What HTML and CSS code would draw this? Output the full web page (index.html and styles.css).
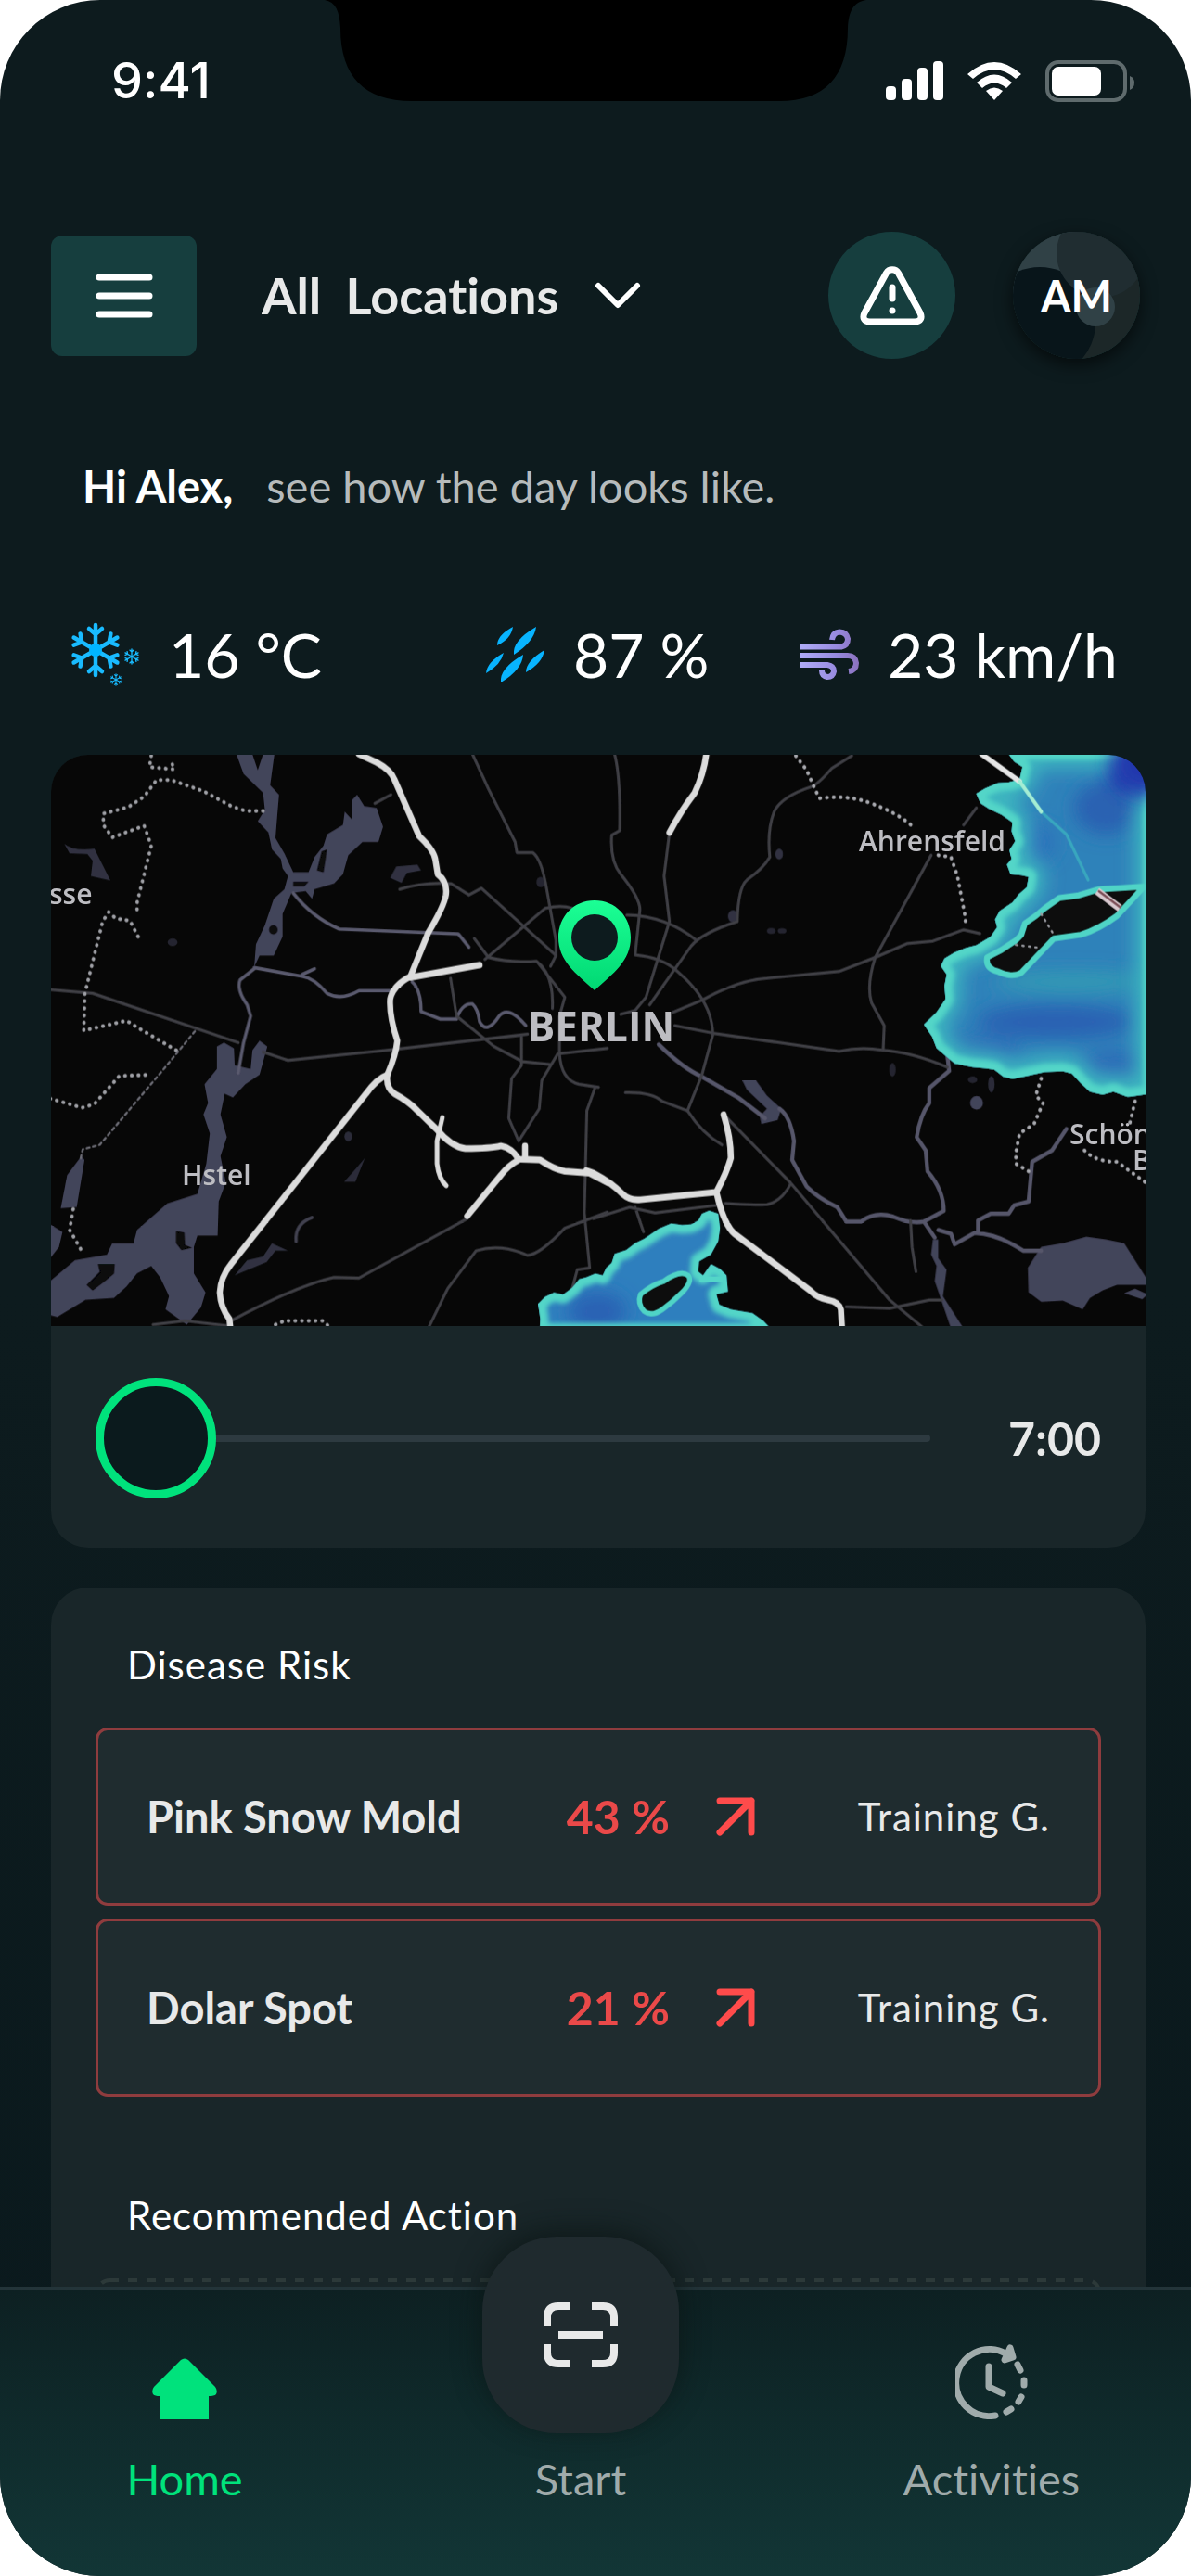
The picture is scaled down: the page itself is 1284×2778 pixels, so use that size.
FILE: index.html
```html
<!DOCTYPE html>
<html lang="en">
<head>
  <meta charset="UTF-8">
  <title>Course Overview</title>
  <meta name="viewport" content="width=device-width, initial-scale=1.0">
  <link rel="stylesheet" href="styles.css">
</head>
<body>

<div class="phone">

  <div class="status-bar">
    <svg class="notch" viewBox="0 0 584 110" aria-hidden="true">
      <path d="M0 0H584C570 2 565 12 564 30Q564 109 490 109H94Q17 109 17 30C16 12 12 2 0 0Z" fill="#000"/>
    </svg>
    <span class="time">9:41</span>
    <div class="status-icons">
      <svg width="62" height="42" viewBox="0 0 62 42" fill="#fff" aria-hidden="true">
        <rect x="0" y="27" width="11" height="15" rx="4"/>
        <rect x="17" y="19" width="11" height="23" rx="4"/>
        <rect x="34" y="7" width="11" height="35" rx="4"/>
        <rect x="51" y="0" width="11" height="42" rx="4"/>
      </svg>
      <svg width="58" height="41" viewBox="0 0 58 41" fill="#fff" aria-hidden="true">
        <path d="M0 13Q29 -13 58 13L52 18Q29 -2 6 18Z"/>
        <path d="M10 22Q29 5 48 22L42 28Q29 17 16 28Z"/>
        <path d="M20 31Q29 24 38 31L29 41Z"/>
      </svg>
      <svg width="96" height="45" viewBox="0 0 96 45" aria-hidden="true">
        <rect x="2" y="2" width="84" height="41" rx="12" fill="none" stroke="#5f6b6d" stroke-width="4"/>
        <rect x="7" y="7" width="53" height="31" rx="7" fill="#fff"/>
        <path d="M91 17Q96 19 96 24Q96 30 91 32Z" fill="#5f6b6d"/>
      </svg>
    </div>
  </div>

  <main>
    <header>
      <button class="menu-button" type="button" aria-label="Menu">
        <svg width="62" height="48" viewBox="0 0 62 48" stroke="#fff" stroke-width="7" stroke-linecap="round">
          <path d="M4 4H58M4 24H58M4 44H58"/>
        </svg>
      </button>
      <div class="location">
        <select aria-label="Location">
          <option>All&nbsp; Locations</option>
        </select>
        <svg width="50" height="30" viewBox="0 0 50 30" fill="none" stroke="#fff" stroke-width="6" stroke-linecap="round" stroke-linejoin="round" aria-hidden="true">
          <path d="M4 4L25 25L46 4"/>
        </svg>
      </div>
      <button class="round-button" type="button" aria-label="Warnings">
        <svg width="70" height="64" viewBox="0 0 70 64" fill="none" stroke="#fff" stroke-width="7" stroke-linecap="round" stroke-linejoin="round">
          <path d="M28.5 7.500L5 50.500C2.500 56 4.500 60 11 60H59C65.500 60 67.500 56 65 50.500L41.500 7.500C38.500 2.500 31.500 2.500 28.500 7.500Z"/>
          <path d="M35 23V35"/>
          <circle cx="35" cy="48" r="3.500" fill="#fff" stroke="none"/>
        </svg>
      </button>
      <button class="round-button avatar" type="button">
        <svg class="avatar-art" viewBox="0 0 137 137" aria-hidden="true">
          <rect width="137" height="137" fill="#1c2728"/>
          <circle cx="24" cy="24" r="50" fill="#304146"/>
          <circle cx="29" cy="98" r="60" fill="#08151a"/>
          <circle cx="95" cy="23" r="48" fill="#202d31"/>
          <circle cx="89" cy="81" r="21" fill="#304146"/>
        </svg>
        <span>AM</span>
      </button>
    </header>

    <p class="greeting"><strong>Hi Alex,</strong> <span>see how the day looks like.</span></p>

    <div class="weather">
      <div class="weather-item">
        <svg width="76" height="70" viewBox="0 0 76 70" aria-hidden="true">
          <defs>
            <g id="flake-arm" fill="none" stroke-linecap="round">
              <path d="M0 0V-27M0 -17L-7 -23M0 -17L7 -23"/>
            </g>
            <g id="flake">
              <use href="#flake-arm"/>
              <use href="#flake-arm" transform="rotate(60)"/>
              <use href="#flake-arm" transform="rotate(120)"/>
              <use href="#flake-arm" transform="rotate(180)"/>
              <use href="#flake-arm" transform="rotate(240)"/>
              <use href="#flake-arm" transform="rotate(300)"/>
            </g>
          </defs>
          <g stroke="#19bbff" stroke-width="4.500">
            <use href="#flake" transform="translate(27 30)"/>
            <use href="#flake" transform="translate(66 37) scale(.3)"/>
            <use href="#flake" transform="translate(49 62) scale(.23)"/>
          </g>
          <circle cx="27" cy="30" r="7" fill="#00b4ff"/>
        </svg>
        <span>16 °C</span>
      </div>
      <div class="weather-item">
        <svg width="64" height="62" viewBox="0 0 64 62" fill="#08b4ff" aria-hidden="true">
          <path d="M29 1Q27 14 12 21Q12 10 29 1Z"/>
          <path d="M54 1Q52 17 30 31Q28 16 54 1Z"/>
          <path d="M19 29Q16 42 0 51Q1 39 19 29Z"/>
          <path d="M40 31Q39 47 16 61Q14 46 40 31Z"/>
          <path d="M63 26Q61 40 43 50Q43 38 63 26Z"/>
        </svg>
        <span>87 %</span>
      </div>
      <div class="weather-item">
        <svg width="65" height="56" viewBox="0 0 65 56" fill="none" stroke="url(#wind)" stroke-width="6" aria-hidden="true">
          <defs>
            <linearGradient id="wind" gradientUnits="userSpaceOnUse" x1="0" y1="0" x2="65" y2="0">
              <stop offset="0" stop-color="#b0adf7"/>
              <stop offset=".6" stop-color="#988be0"/>
              <stop offset="1" stop-color="#8a70bd"/>
            </linearGradient>
          </defs>
          <path d="M0 19.500H45Q52 18 52 11Q51 4 43 3.500Q36 4 35 12"/>
          <path d="M0 29H52Q60 29 61 37Q61 45 53 46"/>
          <path d="M0 39H30Q37 40 37 46Q36 52 30 52Q24 51 24 45"/>
        </svg>
        <span>23 km/h</span>
      </div>
    </div>

    <section class="card map-card">
      <svg class="map" viewBox="0 0 1180 616" role="img" aria-label="Rain map of Berlin">
        <defs>
          <linearGradient id="pin" x1="0" y1="0" x2="0" y2="1">
            <stop offset="0" stop-color="#1cff95"/>
            <stop offset="1" stop-color="#00d873"/>
          </linearGradient>
          <filter id="soft"><feGaussianBlur stdDeviation="1"/></filter>
          <filter id="edge" x="-10%" y="-10%" width="120%" height="120%"><feGaussianBlur stdDeviation="7"/></filter>
          <filter id="cloud" x="-50%" y="-50%" width="200%" height="200%"><feGaussianBlur stdDeviation="24"/></filter>
          <path id="east-shape" d="M1150 8L1165 28L1188 42L1180 75L1150 82L1120 84L1085 98L1060 112L1072 138L1095 152L1130 168L1160 188L1158 212L1168 238L1152 262L1158 285L1145 300L1155 325L1185 328L1205 332L1200 360L1178 378L1160 400L1125 422L1112 445L1118 465L1100 490L1060 513L1030 520L1000 532L972 548L962 568L978 590L972 620L975 655L950 690L915 722L938 755L950 785L975 805L1000 825L1050 835L1085 838L1110 842L1135 860L1160 866L1200 858L1250 848L1300 846L1325 852L1350 878L1375 900L1410 908L1440 900L1480 914L1545 905V0H1150Z"/>
          <path id="south-shape" d="M-150 1535L-148 1500L-154 1460L-135 1442L-110 1430L-85 1436L-60 1418L-40 1395L-20 1390L5 1380L25 1385L35 1365L50 1352L58 1328L90 1318L115 1300L140 1288L180 1262L215 1248L245 1252L270 1250L290 1240L300 1222L320 1214L345 1222L350 1260L345 1295L325 1330L292 1348L290 1375L303 1385L325 1355L350 1368L368 1385L372 1428L340 1435L348 1462L380 1475L440 1485L470 1505L500 1535Z"/>
          <clipPath id="rain-east"><use href="#east-shape"/></clipPath>
          <clipPath id="rain-south"><use href="#south-shape"/></clipPath>
        </defs>
        <rect width="1180" height="616" fill="#070707"/>

        <!-- west half -->
        <g transform="translate(-1 -4) scale(.3827 .4082)" fill="none" stroke-linejoin="round" stroke-linecap="round" filter="url(#soft)">
          <g fill="#43445a">
            <path d="M525 8L545 60L600 110L605 155L585 185L615 215L625 260L650 285L655 310L670 330L660 365L630 390L605 460L580 510L575 570L590 540L630 540L655 490L655 430L680 375L720 370L738 390L745 365L800 350L825 325L840 275L880 240L925 240L938 200L920 150L885 145L865 115L850 130L850 180L830 160L825 195L780 220L770 250L745 280L728 320L685 320L660 270L635 230L640 170L645 115L620 90L632 8H600L585 50L570 8Z"/>
            <path d="M470 780L490 770L518 785L520 830L565 840L570 790L590 765L612 780L590 855L550 880L515 915L492 905L480 960L498 1020L480 1070L495 1140L475 1190L472 1280H415L405 1310V1380L438 1430L425 1470L385 1515L325 1475L335 1440L310 1390L285 1360L245 1380L215 1415L180 1445L100 1450L20 1495L0 1490V1400L70 1345L160 1330L175 1300L235 1300L245 1265L330 1195L415 1170L440 1090L450 1010L432 960L445 930L435 880L470 840Z"/>
            <path d="M88 1070L97 1080L75 1205L30 1208L48 1120Z"/>
            <path d="M0 1250L35 1270L25 1310L0 1340Z"/>
            <path d="M40 245Q65 265 125 258L170 342L115 330L120 290L105 272L55 270Z" opacity=".7"/>
            <path d="M958 335L975 305L1035 300L1045 315L1005 322L990 348Z" opacity=".7"/>
            <path d="M887 1075L860 1138H828L855 1110Z" opacity=".6"/>
            <path d="M520 1385L555 1345L600 1335L625 1300L670 1320L635 1320L610 1350Z" opacity=".7"/>
            <ellipse cx="345" cy="505" rx="14" ry="10" opacity=".5"/>
            <ellipse cx="840" cy="1018" rx="11" ry="13" opacity=".6"/>
            <ellipse cx="1382" cy="346" rx="12" ry="14" opacity=".5"/>
          </g>
          <g fill="#070707">
            <path d="M765 265L780 260L770 320L752 315Z"/>
            <path d="M355 1268L378 1272L380 1305L400 1312L370 1318L355 1300Z"/>
            <path d="M135 1355L182 1355L180 1380L155 1400L120 1425L103 1410L140 1375Z"/>
            <circle cx="629" cy="472" r="12"/>
            <path d="M685 345H728L715 358H685Z"/>
          </g>
          <g stroke="#5a5a6e" stroke-width="9">
            <path d="M575 575L535 605Q525 630 555 670L565 700L545 770L530 850"/>
            <path d="M575 572L710 595Q745 600 780 640Q820 660 870 633H960M710 590L745 575"/>
            <path d="M685 375Q740 440 815 470L1150 483L1180 518"/>
            <path d="M693 1295Q688 1250 738 1232" opacity=".7"/>
            <path d="M1020 610Q1045 630 1045 688L1100 708H1145Q1160 665 1190 668Q1205 680 1210 715Q1230 750 1265 700Q1290 670 1340 725"/>
          </g>
          <g stroke="#3f3f45" stroke-width="8">
            <path d="M1190 8L1235 100L1310 240L1315 268H1360Q1385 285 1400 370L1425 500V540L1410 568"/>
            <path d="M985 365Q1050 345 1130 350L1180 380L1215 362L1425 540"/>
            <path d="M1225 550L1395 415Q1440 405 1470 415M1195 495L1235 545Q1300 560 1370 555Q1420 590 1415 680M1375 560L1450 650L1435 700V800Q1440 870 1490 880L1545 888"/>
            <path d="M0 630L120 640L530 770M600 795L670 817L950 790L1345 748"/>
            <path d="M1128 600L1145 700L1250 780L1330 820L1412 828M1328 755V830L1300 865L1292 970L1320 1030L1378 945L1385 870L1430 800L1570 785"/>
            <path d="M1535 890L1512 950L1505 1220L1520 1365L1485 1370L1465 1440"/>
            <path d="M1175 1235L870 1392L800 1390Q700 1410 510 1505"/>
            <path d="M1065 1525L1120 1420L1200 1320Q1270 1300 1345 1332Q1380 1330 1450 1260L1570 1218"/>
            <path d="M915 138L960 115M290 1515L380 1505L500 1518"/>
          </g>
          <g stroke="#9fa0a6" stroke-width="10" stroke-dasharray="1 18">
            <path d="M285 12L280 42L350 48L340 25M600 158H550L510 145L430 105L340 76H300L265 120L220 148L150 165V195L175 228L265 197L285 250L245 400V435"/>
            <path d="M248 490L225 448L185 442L165 425L148 450L98 640L95 738L215 712L255 735L360 793"/>
            <path d="M0 918L90 942L125 932L195 858L280 855M65 1210L55 1265L92 1325M635 1515L660 1505H770L785 1520"/>
          </g>
          <path d="M408 740L320 840L140 1040L92 1052L85 1080" stroke="#6d6d76" stroke-width="6" stroke-dasharray="8 10"/>
          <g stroke="#dcdcdc" stroke-width="17">
            <path d="M870 8L920 30Q960 50 970 75L1040 225Q1080 260 1085 285L1092 325Q1120 345 1115 380Q1110 410 1065 480L1015 595Q965 620 958 655Q955 700 978 765Q975 800 950 855Q945 890 970 905Q1010 925 1035 950L1090 1000Q1130 1045 1170 1050Q1240 1050 1270 1043Q1300 1048 1320 1078L1380 1080Q1420 1105 1450 1110L1520 1115L1570 1140"/>
            <path d="M1015 598L1210 565M950 855Q920 865 890 905L510 1355Q480 1390 478 1430Q480 1470 505 1500L508 1525"/>
            <path d="M1105 968L1090 1030V1090Q1095 1130 1116 1148" stroke-width="13"/>
            <path d="M1320 1080Q1290 1095 1270 1120L1175 1228M1338 1070V1043"/>
          </g>
        </g>

        <!-- east half -->
        <g transform="translate(585 -4) scale(.3891 .4082)" fill="none" stroke-linejoin="round" stroke-linecap="round" filter="url(#soft)">
          <g fill="#43445a">
            <path d="M1203 1365L1240 1310L1300 1300L1365 1283L1420 1290L1470 1300L1490 1330L1530 1390V1410L1450 1410L1410 1425L1375 1445L1355 1475L1300 1452L1240 1455L1205 1430Z"/>
            <path d="M412 870L450 870L480 910L520 945L510 975L465 985L460 965L480 945L425 895Z"/>
            <path d="M940 1290L955 1290L955 1340L978 1370L968 1440L1025 1525H990L945 1400L950 1360L935 1330Z"/>
            <circle cx="1061" cy="929" r="18"/>
            <path d="M1470 1432L1500 1420L1535 1435L1520 1448Z"/>
            <ellipse cx="514" cy="272" rx="11" ry="14" opacity=".7"/>
            <ellipse cx="386" cy="436" rx="14" ry="16" opacity=".7"/>
            <ellipse cx="492" cy="475" rx="12" ry="8" opacity=".5"/>
            <ellipse cx="522" cy="475" rx="12" ry="7" opacity=".5"/>
            <ellipse cx="828" cy="842" rx="9" ry="18" opacity=".5"/>
            <ellipse cx="1102" cy="880" rx="9" ry="22" opacity=".6"/>
            <ellipse cx="1050" cy="868" rx="13" ry="9" opacity=".5"/>
          </g>
          <g stroke="#56566a" stroke-width="11">
            <path d="M180 775Q250 840 300 860L400 915L475 970"/>
            <path d="M515 945Q545 965 555 1030L550 1080L590 1150Q620 1180 675 1205L700 1243H740Q780 1215 830 1230Q880 1250 915 1243L970 1215Q970 1160 925 1110L920 1055L895 1020Q905 960 930 930V890L985 845L980 805"/>
            <path d="M915 1243L945 1285M955 1265L990 1275L1000 1303L1055 1273Q1120 1275 1190 1320H1240M1065 1270V1240L1100 1222H1150L1165 1200L1205 1190L1215 1085L1270 1055L1310 998"/>
          </g>
          <g stroke="#3f3f45" stroke-width="8">
            <path d="M58 8Q75 70 72 210L50 222Q45 290 75 325Q130 390 128 420L115 538Q190 545 230 580Q330 660 330 750L300 855L260 950"/>
            <path d="M210 215L195 330L210 450L145 650L115 685L75 695M92 433Q200 435 285 500"/>
            <path d="M715 12L660 45Q620 90 600 95Q520 120 500 160Q480 210 488 280Q470 310 425 340Q400 360 398 450Q300 480 270 515L155 670"/>
            <path d="M220 690L300 658Q400 605 480 600L680 582L780 545L870 508L940 502L1025 472L1070 482"/>
            <path d="M225 725L330 745L680 793Q740 780 800 790Q880 795 980 835"/>
            <path d="M935 275L780 545Q755 620 770 665L805 725L802 790M1025 195L1060 150"/>
            <path d="M88 902Q160 900 190 925L260 950Q300 1010 355 1040M360 960L545 1140L820 1450L915 1525"/>
            <path d="M365 1195Q430 1200 480 1198Q520 1190 545 1145M0 1235L100 1205L170 1220L340 1200M115 1205L138 1270M700 1468L820 1472L930 1450H965M878 1240L882 1310L893 1375"/>
          </g>
          <g stroke="#a9aab0" stroke-width="10" stroke-dasharray="1 18">
            <path d="M560 12L590 50L625 125Q700 115 760 135Q850 165 890 205M955 275L990 280L1008 330L1030 440V465"/>
            <path d="M1240 865L1225 910L1245 930L1220 985L1180 1010L1170 1060V1090L1205 1110M1500 925L1485 985M1360 1055Q1390 1085 1450 1085L1530 1140"/>
          </g>
          <g stroke="#dcdcdc" stroke-width="17">
            <path d="M-20 1108L0 1115Q50 1140 80 1170Q100 1188 130 1185L340 1165Q370 1110 380 1075Q380 1020 360 960"/>
            <path d="M340 1165Q360 1250 390 1275L600 1425Q620 1445 650 1450Q680 1455 685 1475L688 1525"/>
            <path d="M312 8Q305 60 280 110Q240 160 210 215"/>
          </g>
          <g clip-path="url(#rain-east)">
            <rect x="900" y="0" width="640" height="930" fill="#2f82ba"/>
            <g filter="url(#cloud)">
              <ellipse cx="1520" cy="60" rx="90" ry="80" fill="#2139ae"/>
              <ellipse cx="1420" cy="150" rx="90" ry="70" fill="#2c62b2"/>
              <ellipse cx="1280" cy="715" rx="220" ry="45" fill="#2b62b3"/>
              <ellipse cx="1450" cy="830" rx="100" ry="40" fill="#2d6db8"/>
              <ellipse cx="1080" cy="790" rx="100" ry="35" fill="#2d6db8"/>
              <ellipse cx="1330" cy="610" rx="220" ry="26" fill="#329bb4"/>
              <ellipse cx="1230" cy="240" rx="50" ry="50" fill="#2d72bb"/>
            </g>
            <use href="#east-shape" stroke="#3db6c0" stroke-width="90" filter="url(#cloud)"/>
            <use href="#east-shape" stroke="#52d6c8" stroke-width="44" filter="url(#edge)"/>
            <path d="M1240 160L1310 220L1370 340" stroke="#39a7bf" stroke-width="8"/>
            <!-- keeps the outer top right corner free of the shore colour -->
            <ellipse cx="1540" cy="30" rx="110" ry="90" fill="#2139ae" filter="url(#cloud)"/>
          </g>
          <path d="M1525 358L1400 365L1340 382L1290 388L1250 415L1225 435L1195 455L1185 485L1170 500L1130 525L1090 545Q1085 575 1120 582Q1160 600 1185 585L1240 530L1275 495L1350 485Q1400 470 1450 435Z" fill="#070707" stroke="#50d4c6" stroke-width="16"/>
          <path d="M1240 430L1275 485M1170 512L1240 520" stroke="#999aa0" stroke-width="6" stroke-dasharray="4 14"/>
          <path d="M1395 370L1458 415" stroke="#d9c9cf" stroke-width="20" stroke-linecap="butt"/>
          <path d="M1400 370L1458 412" stroke="#7b4d55" stroke-width="6"/>
          <path d="M1075 8L1180 80" stroke="#e6e6e6" stroke-width="14"/>
          <path d="M1180 80L1240 160" stroke="#a5eed4" stroke-width="10"/>
          <g clip-path="url(#rain-south)">
            <rect x="-160" y="1200" width="680" height="330" fill="#2f7fbe"/>
            <ellipse cx="10" cy="1480" rx="80" ry="50" fill="#2c62b4" filter="url(#cloud)"/>
            <use href="#south-shape" stroke="#52d6c8" stroke-width="46" filter="url(#edge)"/>
            <path d="M300 1390L350 1400" stroke="#52d6c8" stroke-width="70" filter="url(#edge)"/>
          </g>
          <path d="M130 1435Q160 1410 195 1400Q240 1370 262 1385Q275 1400 245 1430Q220 1455 190 1475Q160 1495 140 1480Q120 1460 130 1435Z" fill="#070707" stroke="#50d4c6" stroke-width="14"/>
        </g>

        <g class="map-labels">
          <text x="-2" y="161">sse</text>
          <text x="141" y="464">Hstel</text>
          <text x="871" y="104">Ahrensfeld</text>
          <text x="1098" y="420">Schön</text>
          <text x="1166" y="448">B</text>
          <text class="city" x="593" y="309" text-anchor="middle">BERLIN</text>
        </g>

        <path d="M586 157C563 157 547 175 547 197C547 222 566 236 586 254C606 236 625 222 625 197C625 175 609 157 586 157Z" fill="url(#pin)"/>
        <circle cx="586" cy="197" r="25" fill="#0d1b1e"/>
      </svg>
      <div class="timeline">
        <input type="range" id="hour" min="7" max="19" value="7" aria-label="Forecast hour">
        <label for="hour">7:00</label>
      </div>
    </section>

    <section class="card risk-card">
      <h2>Disease Risk</h2>
      <div class="risk-row">
        <span class="risk-name">Pink Snow Mold</span>
        <span class="risk-value">43 %</span>
        <svg width="42" height="42" viewBox="0 0 42 42" fill="none" stroke="#ff4b4b" stroke-width="7" stroke-linecap="round" stroke-linejoin="round" aria-hidden="true">
          <path d="M4 4H38V38M38 4L4 38"/>
        </svg>
        <span class="risk-place">Training G.</span>
      </div>
      <div class="risk-row">
        <span class="risk-name">Dolar Spot</span>
        <span class="risk-value">21 %</span>
        <svg width="42" height="42" viewBox="0 0 42 42" fill="none" stroke="#ff4b4b" stroke-width="7" stroke-linecap="round" stroke-linejoin="round" aria-hidden="true">
          <path d="M4 4H38V38M38 4L4 38"/>
        </svg>
        <span class="risk-place">Training G.</span>
      </div>
      <h2 class="next-title">Recommended Action</h2>
      <svg class="action-box" width="100%" height="200" aria-hidden="true">
        <rect class="action-outline" x="2" y="2" rx="13"/>
      </svg>
    </section>
  </main>

  <nav>
    <a href="#" class="active">
      <svg width="70" height="66" viewBox="0 0 70 66" fill="#00e27c" aria-hidden="true">
        <path d="M31 2Q35 -1 39 2L68 31Q71 35 69 39Q67 41 61 41V66H8V41Q3 41 1 39Q-1 35 2 31Z"/>
      </svg>
      Home
    </a>
    <a href="#">
      <span class="scan">
        <svg width="80" height="70" viewBox="0 0 80 70" fill="none" stroke="#e8e9e9" stroke-width="8" aria-hidden="true">
          <path d="M4 25V16Q4 4 16 4H28M52 4H64Q76 4 76 16V25M76 45V54Q76 66 64 66H52M28 66H16Q4 66 4 54V45M16 35H64"/>
        </svg>
      </span>
      Start
    </a>
    <a href="#">
      <svg width="78" height="82" viewBox="0 0 78 82" fill="none" stroke="#a0abab" stroke-width="7" stroke-linecap="round" stroke-linejoin="round" aria-hidden="true">
        <path d="M54 11A36 36 0 1 0 43 78M36 25V47L51 54"/>
        <path d="M59 5L62 15L53 18Z" fill="#a0abab"/>
        <path d="M67 23L70 29M74 40V45M71 58L68 63M60 71L55 74"/>
      </svg>
      Activities
    </a>
  </nav>

</div>

</body>
</html>
```
FILE: styles.css
```css
* {
  box-sizing: border-box;
}

body {
  margin: 0;
  background: #fff;
  color: #fff;
  font-family: Lato, "Liberation Sans", sans-serif;
  font-size: 47px;
  line-height: 60px;
  font-variant-ligatures: none;
}

svg {
  display: block;
  flex: none;
}

button, select {
  font: inherit;
  color: inherit;
  border: none;
  padding: 0;
  cursor: pointer;
}

.phone {
  position: relative;
  display: flex;
  flex-direction: column;
  height: 100vh;
  background: linear-gradient(#0d1b1e 50%, #0a191d);
  border-radius: 108px;
  overflow: hidden;
}

/* status bar */
.status-bar {
  display: flex;
  justify-content: space-between;
  align-items: center;
  height: 174px;
  flex: none;
  padding: 0 61px 0 120px;
}

.notch {
  position: absolute;
  top: 0;
  left: 50%;
  width: 584px;
  margin-left: -292px;
}

.time {
  font-family: Inter, sans-serif;
  font-size: 54px;
  font-weight: 500;
}

.status-icons {
  display: flex;
  align-items: center;
  gap: 26px;
}

main {
  flex: 1;
  min-height: 0;
  overflow: hidden;
  padding: 76px 49px 0 55px;
}

/* header */
header {
  display: flex;
  align-items: center;
}

.menu-button {
  display: flex;
  align-items: center;
  justify-content: center;
  width: 157px;
  height: 130px;
  border-radius: 12px;
  background: #163e3e;
}

.location {
  display: flex;
  align-items: center;
  gap: 38px;
  margin-left: 70px;
  margin-right: auto;
}

.location select {
  appearance: none;
  background: none;
  color: #e8e9e9;
  font-size: 54px;
  font-weight: 700;
  font-variant-ligatures: none;
}

.round-button {
  position: relative;
  display: flex;
  align-items: center;
  justify-content: center;
  width: 137px;
  height: 137px;
  border-radius: 50%;
  background: #163e3e;
  overflow: hidden;
}

.avatar {
  margin: 0 6px 0 62px;
  box-shadow: 0 6px 18px rgba(0, 0, 0, 0.6);
  font-weight: 700;
}

.avatar-art {
  position: absolute;
  inset: 0;
}

.avatar span {
  position: relative;
}

.greeting {
  display: flex;
  gap: 36px;
  margin: 107px 0 0 34px;
}

.greeting span {
  color: #b6bbbc;
}

/* weather */
.weather {
  display: grid;
  grid-template-columns: 448px 338px auto;
  justify-content: start;
  margin: 112px 0 68px 21px;
  font-size: 66px;
  line-height: 80px;
}

.weather-item {
  display: flex;
  align-items: center;
  gap: 30px;
  white-space: nowrap;
}

/* cards */
.card {
  background: #192629;
  border-radius: 40px;
}

.map-card {
  overflow: hidden;
}

.map {
  width: 100%;
}

.map-labels {
  fill: #bdbdc2;
  font-family: "Open Sans", sans-serif;
  font-size: 30px;
  font-weight: 600;
}

.map-labels .city {
  font-size: 44px;
  font-weight: 700;
}

.timeline {
  display: flex;
  align-items: center;
  justify-content: space-between;
  gap: 80px;
  padding: 56px 48px 53px;
}

.timeline input {
  appearance: none;
  flex: 1;
  max-width: 900px;
  height: 130px;
  margin: 0;
  background: none;
}

.timeline input::-webkit-slider-runnable-track {
  height: 8px;
  border-radius: 4px;
  background: #2d3a40;
}

.timeline input::-webkit-slider-thumb {
  appearance: none;
  box-sizing: border-box;
  width: 130px;
  height: 130px;
  margin-top: -61px;
  border: 9px solid #00e27c;
  border-radius: 50%;
  background: #0b1a1d;
}

.timeline label {
  color: #e8e9e9;
  font-size: 50px;
  font-weight: 700;
}

.risk-card {
  margin-top: 43px;
  padding: 53px 48px 100px;
}

h2 {
  margin: 0 34px 38px;
  font-size: 42px;
  font-weight: 400;
  letter-spacing: 1px;
}

.risk-row {
  display: grid;
  grid-template-columns: minmax(0, 1fr) 120px 42px 268px;
  column-gap: 50px;
  align-items: center;
  height: 192px;
  padding: 0 52px;
  border: 3px solid #8f3c3e;
  border-radius: 13px;
  background: #1f2c2f;
  color: #e8e9e9;
}

.risk-row + .risk-row {
  margin-top: 14px;
}

.risk-name {
  font-weight: 700;
  white-space: nowrap;
}

.risk-value {
  color: #ea4949;
  font-size: 50px;
  font-weight: 700;
  text-align: right;
  white-space: nowrap;
}

.risk-place {
  font-size: 42px;
  letter-spacing: 1px;
  text-align: right;
}

.next-title {
  margin-top: 98px;
}

.action-outline {
  width: calc(100% - 4px);
  height: 196px;
  fill: none;
  stroke: #2c3939;
  stroke-width: 4px;
  stroke-dasharray: 10 10;
}

/* bottom navigation */
nav {
  display: grid;
  grid-template-columns: 31% 35.5% 33.5%;
  height: 312px;
  flex: none;
  border-top: 4px solid #233439;
  background: linear-gradient(#0d2022, #123636);
}

nav a {
  position: relative;
  display: flex;
  flex-direction: column;
  align-items: center;
  justify-content: flex-end;
  gap: 34px;
  padding-bottom: 75px;
  color: #a0abab;
  text-decoration: none;
}

nav a.active {
  color: #00e27c;
}

/* raised button over the bar edge */
.scan {
  position: absolute;
  top: -58px;
  display: flex;
  align-items: center;
  justify-content: center;
  width: 212px;
  height: 212px;
  border-radius: 80px;
  background: #1f2a2e;
  box-shadow: 0 -6px 30px rgba(10, 20, 18, 0.7);
}
```
